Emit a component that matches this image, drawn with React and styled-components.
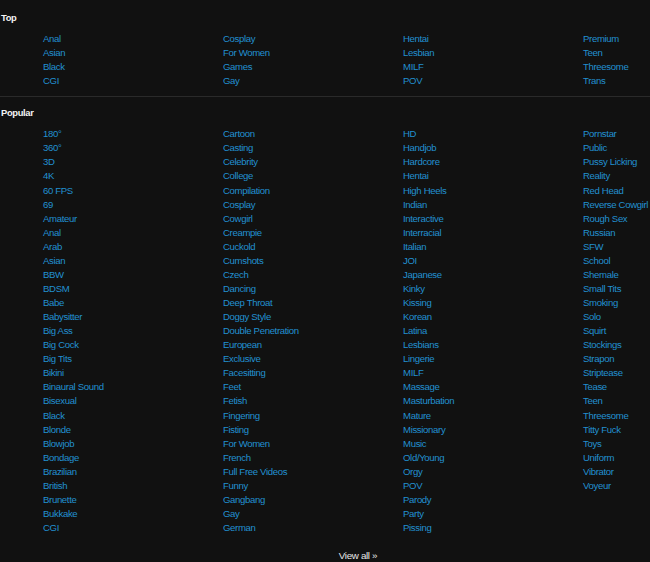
import React from 'react';
import styled, { createGlobalStyle } from 'styled-components';

const TOP = [
    ['Anal', 'Asian', 'Black', 'CGI'],
    ['Cosplay', 'For Women', 'Games', 'Gay'],
    ['Hentai', 'Lesbian', 'MILF', 'POV'],
    ['Premium', 'Teen', 'Threesome', 'Trans'],
];

const POPULAR = [
    ['180°', '360°', '3D', '4K', '60 FPS', '69', 'Amateur', 'Anal', 'Arab', 'Asian', 'BBW', 'BDSM', 'Babe',
        'Babysitter', 'Big Ass', 'Big Cock', 'Big Tits', 'Bikini', 'Binaural Sound', 'Bisexual', 'Black',
        'Blonde', 'Blowjob', 'Bondage', 'Brazilian', 'British', 'Brunette', 'Bukkake', 'CGI'],
    ['Cartoon', 'Casting', 'Celebrity', 'College', 'Compilation', 'Cosplay', 'Cowgirl', 'Creampie', 'Cuckold',
        'Cumshots', 'Czech', 'Dancing', 'Deep Throat', 'Doggy Style', 'Double Penetration', 'European',
        'Exclusive', 'Facesitting', 'Feet', 'Fetish', 'Fingering', 'Fisting', 'For Women', 'French',
        'Full Free Videos', 'Funny', 'Gangbang', 'Gay', 'German'],
    ['HD', 'Handjob', 'Hardcore', 'Hentai', 'High Heels', 'Indian', 'Interactive', 'Interracial', 'Italian',
        'JOI', 'Japanese', 'Kinky', 'Kissing', 'Korean', 'Latina', 'Lesbians', 'Lingerie', 'MILF', 'Massage',
        'Masturbation', 'Mature', 'Missionary', 'Music', 'Old/Young', 'Orgy', 'POV', 'Parody', 'Party', 'Pissing'],
    ['Pornstar', 'Public', 'Pussy Licking', 'Reality', 'Red Head', 'Reverse Cowgirl', 'Rough Sex', 'Russian',
        'SFW', 'School', 'Shemale', 'Small Tits', 'Smoking', 'Solo', 'Squirt', 'Stockings', 'Strapon',
        'Striptease', 'Tease', 'Teen', 'Threesome', 'Titty Fuck', 'Toys', 'Uniform', 'Vibrator', 'Voyeur'],
];

const GlobalStyle = createGlobalStyle`
    html, body {
        margin: 0;
        padding: 0;
        background: #111111;
        overflow: hidden;
    }
    body {
        font-family: "Liberation Sans", Arial, sans-serif;
    }
`;

const Page = styled.div`
    width: 716px;
    padding-top: 11px;
    font-size: 9.6px;
    letter-spacing: -0.35px;
`;

const Heading = styled.h2`
    margin: 0 0 7px;
    padding-left: 1px;
    font-size: 9.4px;
    line-height: 14px;
    font-weight: bold;
    color: #f4f4f4;
`;

const Columns = styled.div`
    display: grid;
    grid-template-columns: repeat(4, 180px);
    padding-left: 43px;
`;

const Column = styled.ul`
    list-style: none;
    margin: 0;
    padding: 0;
`;

const Item = styled.li`
    line-height: 14.07px;
    white-space: nowrap;

    a {
        color: #2290d0;
        text-decoration: none;
    }
`;

const Divider = styled.hr`
    border: none;
    height: 1px;
    background: #2a2a2a;
    margin: 8px 0 9px;
`;

const Footer = styled.div`
    margin-top: 14px;
    text-align: center;
    line-height: 14px;
    font-size: 9.8px;

    a {
        color: #e8e8e8;
        text-decoration: none;
    }
`;

const CategoryList = ({ columns }) => (
    <Columns>
        {columns.map((col, i) => (
            <Column key={i}>
                {col.map((name) => (
                    <Item key={name}><a href="#">{name}</a></Item>
                ))}
            </Column>
        ))}
    </Columns>
);

const App = () => (
    <>
        <GlobalStyle />
        <Page>
            <Heading>Top</Heading>
            <CategoryList columns={TOP} />
            <Divider />
            <Heading>Popular</Heading>
            <CategoryList columns={POPULAR} />
            <Footer><a href="#">View all »</a></Footer>
        </Page>
    </>
);

export default App;
